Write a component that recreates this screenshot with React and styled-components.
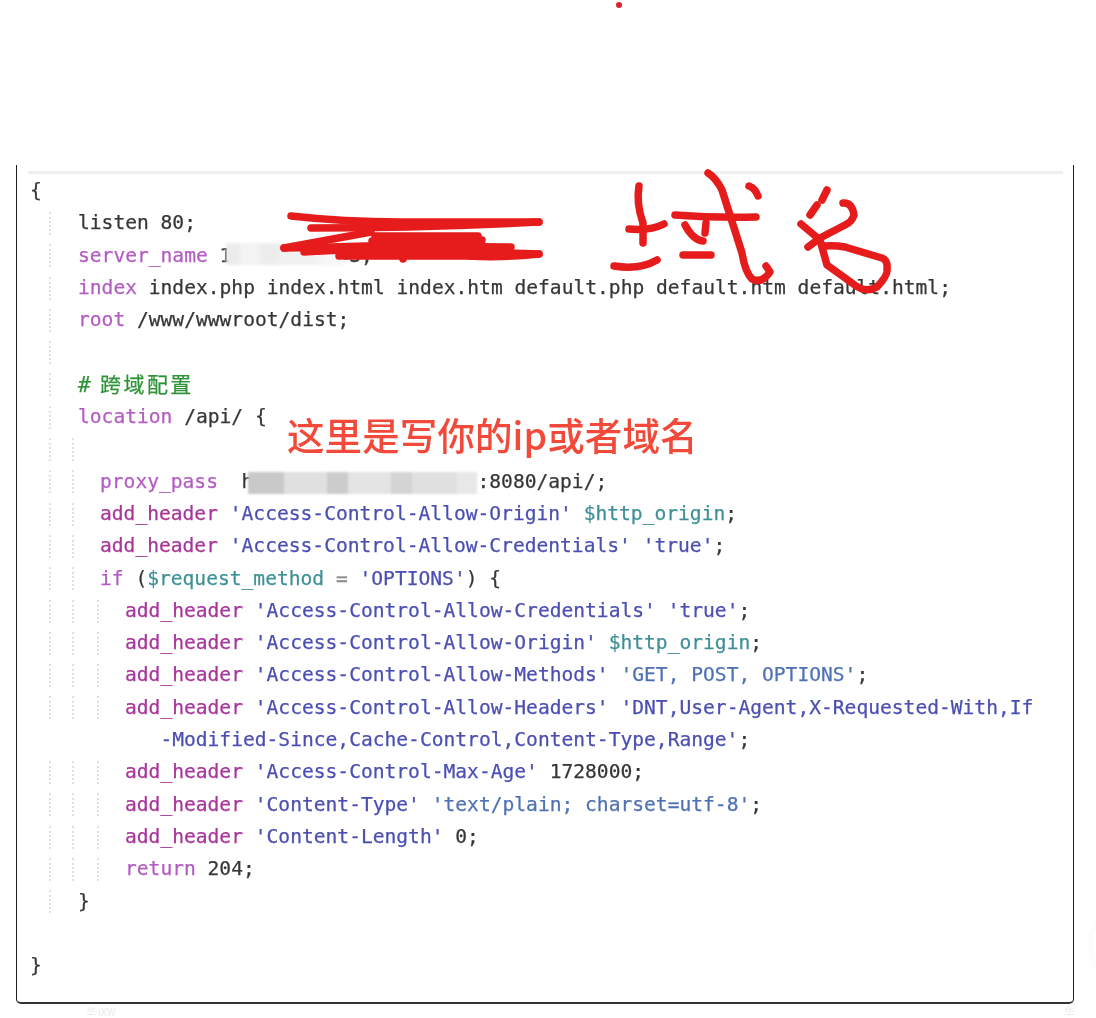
import styled, { createGlobalStyle } from 'styled-components';

const GlobalStyle = createGlobalStyle`
html, body {
  margin: 0;
  padding: 0;
  background: #fff;
  overflow: hidden;
}
`;

const tones = {
  plain: '#363636',
  muted: '#8a8a8a',
  prop: '#b35cc2',
  key: '#a8349a',
  str: '#4b4fb2',
  soft: '#4f72b4',
  vars: '#3f9096',
  note: '#2f9438',
};

// guide offsets: each one is the gap from the previous guide
const guideGaps = [21, 23, 25];
// text start per nesting level
const indents = [0, 48, 70, 95];

const lines = [
  { level: 0, parts: [['plain', '{']] },
  { level: 1, parts: [['plain', 'listen 80;']] },
  { level: 1, parts: [['prop', 'server_name'], ['plain', ' 1          3;']] },
  { level: 1, parts: [['prop', 'index'], ['plain', ' index.php index.html index.htm default.php default.htm default.html;']] },
  { level: 1, parts: [['prop', 'root'], ['plain', ' /www/wwwroot/dist;']] },
  { level: 1, parts: [] },
  { level: 1, comment: true, parts: [['note', '# 跨域配置']] },
  { level: 1, parts: [['prop', 'location'], ['plain', ' /api/ {']] },
  { level: 2, parts: [] },
  { level: 2, parts: [['prop', 'proxy_pass'], ['plain', '  h                   :8080/api/;']] },
  { level: 2, parts: [['key', 'add_header'], ['str', " 'Access-Control-Allow-Origin'"], ['vars', ' $http_origin'], ['plain', ';']] },
  { level: 2, parts: [['key', 'add_header'], ['str', " 'Access-Control-Allow-Credentials'"], ['str', " 'true'"], ['plain', ';']] },
  { level: 2, parts: [['prop', 'if'], ['plain', ' ('], ['vars', '$request_method'], ['muted', ' = '], ['str', "'OPTIONS'"], ['plain', ') {']] },
  { level: 3, parts: [['key', 'add_header'], ['str', " 'Access-Control-Allow-Credentials'"], ['str', " 'true'"], ['plain', ';']] },
  { level: 3, parts: [['key', 'add_header'], ['str', " 'Access-Control-Allow-Origin'"], ['vars', ' $http_origin'], ['plain', ';']] },
  { level: 3, parts: [['key', 'add_header'], ['str', " 'Access-Control-Allow-Methods'"], ['soft', " 'GET, POST, OPTIONS'"], ['plain', ';']] },
  { level: 3, parts: [['key', 'add_header'], ['str', " 'Access-Control-Allow-Headers'"], ['str', " 'DNT,User-Agent,X-Requested-With,If"]] },
  { level: 3, wrapped: true, parts: [['str', "   -Modified-Since,Cache-Control,Content-Type,Range'"], ['plain', ';']] },
  { level: 3, parts: [['key', 'add_header'], ['str', " 'Access-Control-Max-Age'"], ['plain', ' 1728000;']] },
  { level: 3, parts: [['key', 'add_header'], ['str', " 'Content-Type'"], ['soft', " 'text/plain; charset=utf-8'"], ['plain', ';']] },
  { level: 3, parts: [['key', 'add_header'], ['str', " 'Content-Length'"], ['plain', ' 0;']] },
  { level: 3, parts: [['prop', 'return'], ['plain', ' 204;']] },
  { level: 1, parts: [['plain', '}']] },
  { level: 0, parts: [] },
  { level: 0, parts: [['plain', '}']] },
];

const mosaicCells = [
  ['#c9c9c9', 36], ['#e0e0e0', 43], ['#cccccc', 21], ['#e4e4e4', 43],
  ['#d4d4d4', 21], ['#e0e0e0', 45], ['#e8e8e8', 20],
];

const paleCells = [
  ['#ececec', 14], ['#f3f3f3', 20], ['#ededed', 20], ['#f1f1f1', 40], ['#f6f6f6', 25],
];

const scribbles = [
  // redaction over server_name
  'M291 216 Q345 222 400 222 L539 222',
  'M311 228 Q420 228 539 222',
  'M371 232 L284 248',
  'M284 248 Q400 246 482 240',
  'M304 252 Q400 246 511 247',
  'M339 256 Q450 250 539 254',
  'M375 236 L478 236',
  'M372 241 L478 241',
  'M372 246 L478 246',
  'M345 256 L480 256',
  'M470 256 Q500 258 539 254',
  'M403 255 L403 259',
  // 域, left part
  'M639 186 Q636 203 643 223 L643 243',
  'M629 229 Q650 231 664 224',
  'M614 266 Q640 270 657 260',
  // 域, right part
  'M675 215 Q715 218 756 217',
  'M708 173 Q716 178 722 190 Q733 225 742 253 Q745 272 752 279 Q762 284 770 272 L766 266',
  'M749 186 Q755 188 758 196',
  'M685 225 Q693 240 703 241',
  'M706 223 L705 233',
  'M683 255 L711 255',
  // 名
  'M827 190 L822 200',
  'M817 205 L810 215',
  'M843 203 Q852 202 854 215 Q852 222 845 225 L820 238 L808 247',
  'M801 224 L820 240 L827 265 L852 283 Q865 294 877 287 Q888 275 887 270 Q888 260 882 258 L845 247 Q835 245 824 246',
];

function CodeLine({ level, parts, comment, wrapped }) {
  return (
    <Line>
      <Indent $width={indents[level]}>
        {guideGaps.slice(0, wrapped ? 0 : level).map((gap, i) => (
          <Guide key={i} $gap={gap} />
        ))}
      </Indent>
      <Code $comment={comment}>
        {parts.map(([tone, text], i) => (
          <Token key={i} $tone={tone}>{text}</Token>
        ))}
      </Code>
    </Line>
  );
}

export default function App() {
  return (
    <Page>
      <GlobalStyle />
      <RedDot />
      <Card>
        <TopBar />
        <CodeArea>
          {lines.map((line, i) => (
            <CodeLine key={i} {...line} />
          ))}
        </CodeArea>
      </Card>
      <Footer>
        <Watermark>华 iXW</Watermark>
        <Watermark>华</Watermark>
      </Footer>
      <ServerMask>
        {paleCells.map(([color, width], i) => (
          <Cell key={i} $color={color} $width={width} />
        ))}
      </ServerMask>
      <ProxyMask>
        {mosaicCells.map(([color, width], i) => (
          <Cell key={i} $color={color} $width={width} />
        ))}
      </ProxyMask>
      <Ink viewBox="0 0 1096 1018">
        {scribbles.map((d, i) => (
          <path key={i} d={d} />
        ))}
      </Ink>
      <Annotation>这里是写你的ip或者域名</Annotation>
      <EdgeBlob />
    </Page>
  );
}

const Page = styled.div`
position: relative;
display: flex;
flex-direction: column;
width: 1096px;
height: 1018px;
padding: 165px 22px 0 16px;
box-sizing: border-box;
background: #fff;
overflow: hidden;
`;

const RedDot = styled.div`
position: absolute;
left: 616px;
top: 2px;
width: 6px;
height: 6px;
border-radius: 50%;
background: #e0202a;
`;

const Card = styled.div`
flex: 1;
box-sizing: border-box;
padding: 6px 0 0;
border: 1.5px solid #1c1c1c;
border-top: none;
border-bottom: 2px solid #333;
border-radius: 0 0 5px 5px;
background: #fff;
`;

const TopBar = styled.div`
height: 3px;
margin: 0 10px 1px 11px;
background: #efefef;
`;

const CodeArea = styled.div`
padding-left: 13px;
filter: blur(0.65px);
`;

const Line = styled.div`
display: flex;
align-items: center;
height: 32.3px;
`;

const Indent = styled.div`
display: flex;
align-items: center;
flex-shrink: 0;
width: ${(p) => p.$width}px;
height: 100%;
`;

const Guide = styled.span`
width: 0;
height: 23px;
margin-left: ${(p) => p.$gap - 2}px;
border-left: 2px dotted #e0e0e0;
`;

const Code = styled.div`
font-family: "DejaVu Sans Mono", "Noto Sans CJK SC", monospace;
font-size: ${(p) => (p.$comment ? '21px' : '19.6px')};
letter-spacing: ${(p) => (p.$comment ? '2.4px' : '0')};
word-spacing: ${(p) => (p.$comment ? '-8px' : '0')};
-webkit-text-stroke: 0.25px currentColor;
white-space: pre;
line-height: 32.3px;
`;

const Token = styled.span`
color: ${(p) => tones[p.$tone]};
`;

const Footer = styled.div`
display: flex;
justify-content: space-between;
align-items: center;
flex-shrink: 0;
height: 14px;
padding-left: 70px;
`;

const Watermark = styled.div`
font-family: "Noto Sans CJK SC", sans-serif;
font-size: 10px;
line-height: 11px;
color: #ececec;
`;

const ServerMask = styled.div`
position: absolute;
left: 226px;
top: 243px;
display: flex;
height: 22px;
filter: blur(1.5px);
`;

const ProxyMask = styled.div`
position: absolute;
left: 248px;
top: 472px;
display: flex;
height: 22px;
filter: blur(1px);
`;

const Cell = styled.div`
width: ${(p) => p.$width}px;
background: ${(p) => p.$color};
`;

const Ink = styled.svg`
position: absolute;
left: 0;
top: 0;
width: 1096px;
height: 1018px;
fill: none;
stroke: #e61c1c;
stroke-width: 7.5;
stroke-linecap: round;
stroke-linejoin: round;
pointer-events: none;
`;

const Annotation = styled.div`
position: absolute;
left: 287px;
top: 407px;
font-family: "Noto Sans CJK SC", sans-serif;
font-size: 37.5px;
font-weight: 500;
line-height: 54px;
letter-spacing: 0.1px;
color: #f24a3a;
white-space: nowrap;
filter: blur(0.5px);
`;

const EdgeBlob = styled.div`
position: absolute;
left: 1092px;
top: 917px;
width: 40px;
height: 56px;
border-radius: 50%;
background: #fff;
box-shadow: 0 0 12px rgba(0, 0, 0, 0.04);
`;
